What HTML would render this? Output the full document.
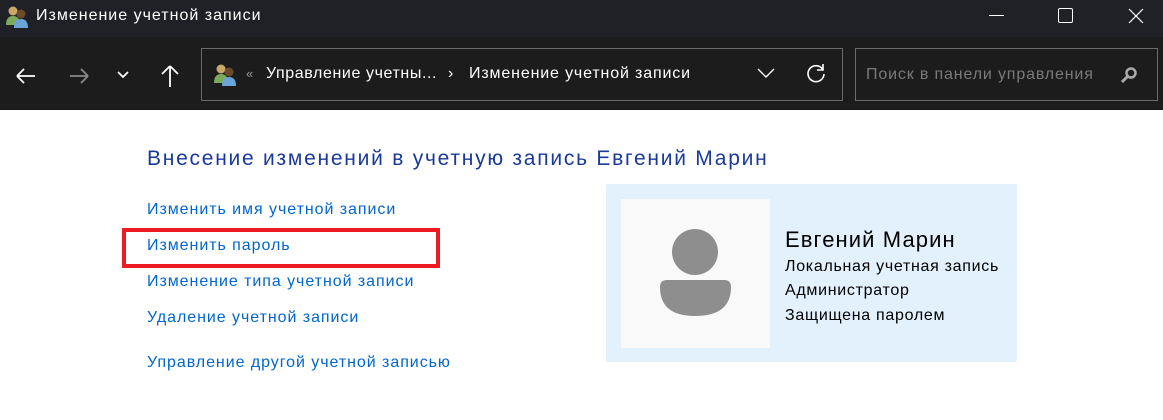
<!DOCTYPE html>
<html><head><meta charset="utf-8"><style>
*{margin:0;padding:0;box-sizing:border-box}
body{width:1163px;height:420px;background:#fff;font-family:"Liberation Sans","DejaVu Sans",sans-serif;position:relative;overflow:hidden}
.abs{position:absolute;white-space:nowrap}
#title{left:0;top:0;width:1163px;height:37px;background:#202126}
#tool{left:0;top:37px;width:1163px;height:73px;background:#1c1c1c}
.box{border:1px solid #6a6a6a;background:#1c1c1c}
.lnk{color:#0066cc;font-size:16px;left:147px;line-height:20px;letter-spacing:0.95px}
.rt{color:#000;font-size:16px;left:785px;line-height:20px;letter-spacing:0.7px}
</style></head><body>
<div id="title" class="abs"></div>
<div id="tool" class="abs"></div>
<svg class="abs" style="left:4px;top:3px" width="26" height="26" viewBox="0 0 26 26">
<circle cx="9" cy="8" r="4.5" fill="#c9a86a"/><path d="M2 22 q0-9 7-9 q7 0 7 9z" fill="#7aab5a"/>
<circle cx="17" cy="11" r="4.5" fill="#6b4a2e"/><path d="M10 25 q0-9 7-9 q7 0 7 9z" fill="#6aa4d8"/></svg>
<div class="abs" style="left:36px;top:7px;color:#fff;font-size:16px;letter-spacing:1px">Изменение учетной записи</div>
<div class="abs" style="left:989px;top:15px;width:15px;height:1px;background:#fff"></div>
<div class="abs" style="left:1058px;top:8px;width:15px;height:15px;border:1px solid #fff;border-radius:2px"></div>
<svg class="abs" style="left:1128px;top:8px" width="16" height="16"><path d="M1 1L15 15M15 1L1 15" stroke="#fff" stroke-width="1.2"/></svg>
<svg class="abs" style="left:14px;top:64px" width="24" height="24"><path d="M3 12H21M3 12L10 5M3 12L10 19" stroke="#fff" stroke-width="1.8" fill="none"/></svg>
<svg class="abs" style="left:67px;top:64px" width="24" height="24"><path d="M3 12H21M21 12L14 5M21 12L14 19" stroke="#8a8a8a" stroke-width="1.8" fill="none"/></svg>
<svg class="abs" style="left:116px;top:68px" width="14" height="14"><path d="M2 4L7 9L12 4" stroke="#fff" stroke-width="1.8" fill="none"/></svg>
<svg class="abs" style="left:158px;top:63px" width="24" height="26"><path d="M12 24V3M12 3L4 11M12 3L20 11" stroke="#fff" stroke-width="1.8" fill="none"/></svg>
<div class="abs box" style="left:201px;top:48px;width:642px;height:53px"></div>
<svg class="abs" style="left:212px;top:61px" width="26" height="26" viewBox="0 0 26 26">
<circle cx="9" cy="8" r="4.5" fill="#c9a86a"/><path d="M2 22 q0-9 7-9 q7 0 7 9z" fill="#7aab5a"/>
<circle cx="17" cy="11" r="4.5" fill="#6b4a2e"/><path d="M10 25 q0-9 7-9 q7 0 7 9z" fill="#6aa4d8"/></svg>
<div class="abs" style="left:246px;top:66px;color:#999;font-size:13px">«</div>
<div class="abs" style="left:266px;top:65px;color:#fff;font-size:16px;letter-spacing:0.6px">Управление учетны...</div>
<div class="abs" style="left:448px;top:65px;color:#fff;font-size:16px">›</div>
<div class="abs" style="left:469px;top:65px;color:#fff;font-size:16px;letter-spacing:0.85px">Изменение учетной записи</div>
<svg class="abs" style="left:757px;top:67px" width="18" height="12"><path d="M1 2L9 10L17 2" stroke="#fff" stroke-width="1.4" fill="none"/></svg>
<svg class="abs" style="left:805px;top:62px" width="22" height="22"><path d="M17.5 7A8 8 0 1 0 19 12" stroke="#fff" stroke-width="1.6" fill="none"/><path d="M18 2V8H12" stroke="#fff" stroke-width="1.6" fill="none"/></svg>
<div class="abs box" style="left:855px;top:48px;width:303px;height:53px"></div>
<div class="abs" style="left:866px;top:66px;color:#7a7a7a;font-size:16px;letter-spacing:0.85px">Поиск в панели управления</div>
<svg class="abs" style="left:1119px;top:66px" width="20" height="20"><circle cx="12" cy="7" r="4.5" stroke="#aaa" stroke-width="2.5" fill="none"/><path d="M9 10L3 16" stroke="#aaa" stroke-width="3"/></svg>

<div class="abs" style="left:147px;top:147px;color:#1a3a9a;font-size:21px;letter-spacing:1.75px">Внесение изменений в учетную запись Евгений Марин</div>
<div class="abs lnk" style="top:200px">Изменить имя учетной записи</div>
<div class="abs lnk" style="top:236px">Изменить пароль</div>
<div class="abs lnk" style="top:272px">Изменение типа учетной записи</div>
<div class="abs lnk" style="top:308px">Удаление учетной записи</div>
<div class="abs lnk" style="top:353px">Управление другой учетной записью</div>
<div class="abs" style="left:122px;top:228px;width:318px;height:40px;border:4px solid #ed1c24"></div>

<div class="abs" style="left:606px;top:184px;width:411px;height:178px;background:#e3f1fd;border-radius:2px"></div>
<div class="abs" style="left:621px;top:199px;width:149px;height:149px;background:#f9f9f9"></div>
<svg class="abs" style="left:621px;top:199px" width="149" height="149"><circle cx="74" cy="53" r="23" fill="#8e8e8e"/><path d="M39 88 Q39 81 46 81 H103 Q110 81 110 88 Q110 117 74 117 Q39 117 39 88Z" fill="#8e8e8e"/></svg>
<div class="abs" style="left:785px;top:227px;color:#000;font-size:22px;letter-spacing:1.1px">Евгений Марин</div>
<div class="abs rt" style="top:257px">Локальная учетная запись</div>
<div class="abs rt" style="top:281px">Администратор</div>
<div class="abs rt" style="top:306px">Защищена паролем</div>
</body></html>
